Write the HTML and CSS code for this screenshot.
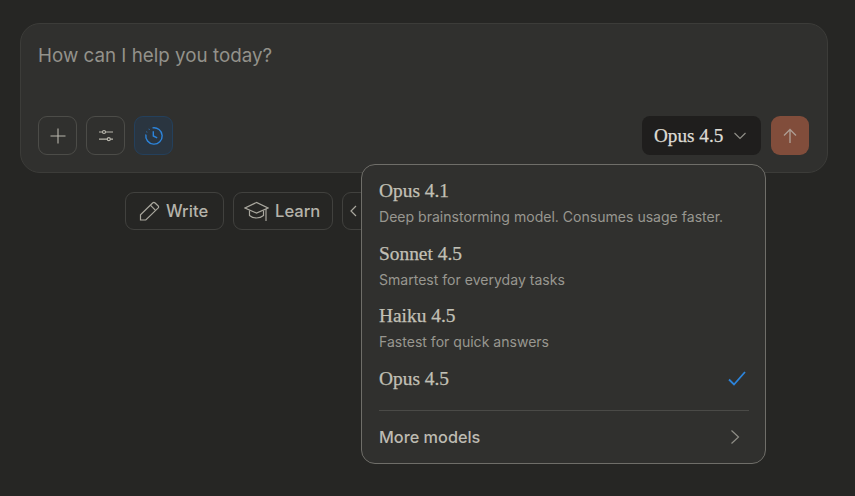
FILE: index.html
```html
<!DOCTYPE html>
<html lang="en">
<head>
<meta charset="utf-8">
<title>Chat</title>
<link rel="stylesheet" href="styles.css">
</head>
<body>
<main class="page">
  <section class="composer">
    <div class="placeholder">How can I help you today?</div>
    <div class="toolbar">
      <button class="tool"><svg width="20" height="20" viewBox="0 0 20 20" class="ico plus"><path d="M10 2.500v15M2.500 10h15"/></svg></button>
      <button class="tool"><svg width="20" height="20" viewBox="0 0 20 20" class="ico thin"><path d="M3 6h3.600M9.400 6H17M3 13.200h8.400M14.200 13.200H17"/><circle cx="8" cy="6" r="1.500"/><circle cx="12.800" cy="13.200" r="1.500"/></svg></button>
      <button class="tool active"><svg width="20" height="20" viewBox="0 0 20 20" class="ico blue"><path d="M8.500 1.900A8.200 8.200 0 1 1 1.900 8.500"/><path d="M2.600 6.300l.3-.6M4.900 3.500l.5-.4"/><path d="M9.300 5.200V10L13.200 11.800"/></svg></button>
      <div class="spacer"></div>
      <button class="model"><span>Opus 4.5</span><svg width="14" height="14" viewBox="0 0 14 14" class="ico dim"><path d="M1.500 4l5.500 5.500L12.500 4"/></svg></button>
      <button class="send"><svg width="18" height="18" viewBox="0 0 18 18" class="ico send-ico"><path d="M9 16V2.500M3 8.500l6-6 6 6"/></svg></button>
    </div>
  </section>
  <nav class="chips">
    <button class="chip write"><svg width="22" height="22" viewBox="0 0 22 22" class="ico soft"><path d="M2.500 20V14.700L14.600 3a1.800 1.800 0 0 1 2.500 0L20 5.700a1.800 1.800 0 0 1 0 2.500L7.800 20Z"/><path d="M12.400 5.200l4.900 4.900"/></svg>Write</button>
    <button class="chip learn"><svg width="25" height="22" viewBox="0 0 25 22" class="ico soft"><path d="M12.500 2.500L1 8l11.500 5L24 8Z"/><path d="M5.500 10.500v5c2.200 1.800 4.300 2.500 7 2.500s4.800-.7 7-2.500v-5"/><path d="M22 9v12"/></svg>Learn</button>
    <button class="chip code"><svg width="22" height="22" viewBox="0 0 22 22" class="ico soft"><path d="M7 6l-5 5 5 5"/></svg></button>
  </nav>
  <section class="menu">
    <div class="item"><div class="name">Opus 4.1</div><div class="desc">Deep brainstorming model. Consumes usage faster.</div></div>
    <div class="item"><div class="name">Sonnet 4.5</div><div class="desc">Smartest for everyday tasks</div></div>
    <div class="item"><div class="name">Haiku 4.5</div><div class="desc">Fastest for quick answers</div></div>
    <div class="item row"><div class="name">Opus 4.5</div><svg width="20" height="20" viewBox="0 0 20 20" class="ico check"><path d="M2 10.500l5 5L18 3"/></svg></div>
    <div class="rule"></div>
    <div class="row more"><span>More models</span><svg width="14" height="16" viewBox="0 0 14 16" class="ico dim"><path d="M3.500 1.500L10.500 8l-7 6.500"/></svg></div>
  </section>
</main>
</body>
</html>
```
FILE: styles.css
```css
* { box-sizing: border-box; }
html, body { margin: 0; height: 100%; }
body { background: #262624; color: #c2c0b6; font-family: Inter, "Noto Sans", sans-serif; overflow: hidden; }
button { font: inherit; color: inherit; background: none; padding: 0; }
.page { position: relative; height: 496px; padding: 23px 27px 0 20px; }
.composer { height: 150px; background: #30302e; border: 1px solid #3c3c39; border-radius: 20px; padding: 0 18px 17px 17px; display: flex; flex-direction: column; justify-content: space-between; }
.placeholder { font-size: 18.800px; line-height: 24px; color: #93928b; padding-top: 20px; }
.toolbar { display: flex; align-items: center; height: 39px; }
.tool { width: 39px; height: 39px; margin-right: 9px; border: 1px solid #4c4c48; border-radius: 9px; display: flex; align-items: center; justify-content: center; }
.tool.active { background: #2a3540; border-color: #24405c; }
.spacer { flex: 1; }
.ico { fill: none; stroke: #b8b6ac; stroke-width: 1.300; }
.ico.plus { stroke-width: 1.100; }
.ico.thin { stroke-width: 1.200; }
.ico.blue { stroke: #2c84db; stroke-width: 1.400; }
.ico.dim { stroke: #8f8e87; stroke-width: 1.200; }
.ico.soft { stroke: #a9a79e; stroke-width: 1.200; }
.ico.check { stroke: #2c84db; stroke-width: 1.800; }
.ico.send-ico { stroke: #ad9c92; stroke-width: 1.400; }
.model { width: 119px; height: 39px; margin-right: 10px; background: #1f1e1d; border: 0; border-radius: 8px; display: flex; align-items: center; gap: 10px; padding-left: 12px; font-family: "Liberation Serif", serif; font-size: 19.200px; -webkit-text-stroke: 0.250px currentColor; color: #dedcd4; }
.send { width: 38px; height: 39px; background: #814d3b; border: 0; border-radius: 9px; display: flex; align-items: center; justify-content: center; }
.chips { display: flex; gap: 9px; margin: 19px 0 0 105px; }
.chip { height: 38px; border: 1px solid #41413e; border-radius: 9px; display: flex; align-items: center; gap: 6px; font-size: 16.600px; font-weight: 500; color: #b5b3aa; white-space: nowrap; }
.chip.write { width: 99px; padding-left: 12px; }
.chip.learn { width: 100px; padding-left: 10px; }
.chip.code { width: 80px; padding-left: 6px; }
.menu { position: absolute; left: 361px; top: 164px; width: 405px; height: 300px; background: #30302e; border: 1px solid #6f6e69; border-radius: 14px; padding: 12px 16px 0 17px; }
.item { height: 62.500px; }
.name { font-family: "Liberation Serif", serif; font-size: 19.400px; line-height: 28px; -webkit-text-stroke: 0.250px currentColor; color: #c2c0b6; }
.desc { font-size: 14.050px; line-height: 22px; margin-top: 1px; color: #989790; }
.row { display: flex; align-items: center; justify-content: space-between; }
.item.row { height: 28px; padding-right: 2px; }
.rule { height: 1px; background: #4a4a47; margin-top: 17px; }
.more { height: 52px; font-size: 16.300px; font-weight: 500; color: #bdbbb2; padding-right: 7px; }
```
